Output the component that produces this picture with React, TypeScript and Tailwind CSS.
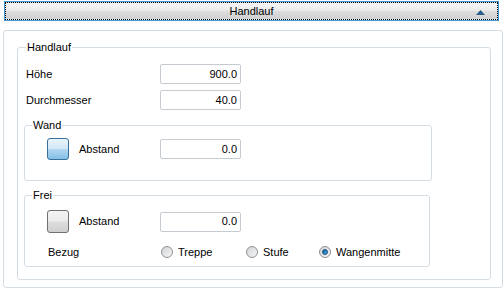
import React from 'react';

const font = { fontFamily: '"Liberation Sans", Arial, sans-serif' };

function NumField({ value }: { value: string }) {
  return (
    <div className="w-[81px] h-[20px] border border-[#c5cbd1] rounded-[2px] bg-white flex items-center justify-end pr-[3px] text-[11px] text-black">
      {value}
    </div>
  );
}

function Radio({ label, checked }: { label: string; checked?: boolean }) {
  return (
    <div className="flex items-center gap-[5px]">
      <div className="w-[12px] h-[12px] rounded-full border border-[#8f9193] bg-gradient-to-br from-[#d2d4d6] to-[#f6f6f6] flex items-center justify-center">
        {checked && (
          <div className="w-[6px] h-[6px] rounded-full bg-gradient-to-br from-[#0d5b9c] to-[#4cb3ee] border border-[#1b4f7c]" />
        )}
      </div>
      <span>{label}</span>
    </div>
  );
}

export default function App() {
  return (
    <div className="w-[504px] h-[292px] bg-white text-[11px] text-black overflow-hidden" style={font}>
      {/* Section header */}
      <div className="ml-[4px] mt-[1px] w-[495px] h-[20px] border border-[#3c98d8] p-0">
        <div className="h-full border border-dotted border-black bg-[linear-gradient(to_bottom,#f6f6f6_0%,#ececec_45%,#dedede_50%,#d0d0d0_100%)] relative flex items-center justify-center">
          <span className="leading-[13px]">Handlauf</span>
          <svg className="absolute right-[12px] top-[7px]" width="9" height="5" viewBox="0 0 9 5">
            <polygon points="0,5 4.5,0 9,5" fill="#2c5d8a" />
          </svg>
        </div>
      </div>

      {/* Outer panel */}
      <div className="ml-[3px] mt-[9px] w-[500px] h-[258px] border border-[#d5dde4] rounded-[3px] bg-white">
        <fieldset className="ml-[13px] mt-[10px] w-[474px] h-[239px] border border-[#d5dde4] rounded-[3px] p-0 m-0">
          <legend className="ml-[8px] px-[1px] leading-[13px]">Handlauf</legend>

          <div className="flex flex-col">
            <div className="flex items-center mt-[10px]">
              <span className="ml-[8px] w-[134px]">Höhe</span>
              <NumField value="900.0" />
            </div>
            <div className="flex items-center mt-[6px]">
              <span className="ml-[8px] w-[134px]">Durchmesser</span>
              <NumField value="40.0" />
            </div>

            {/* Wand */}
            <fieldset className="ml-[6px] mt-[9px] w-[408px] h-[62px] border border-[#d5dde4] rounded-[3px] p-0">
              <legend className="ml-[7px] px-[1px] leading-[13px]">Wand</legend>
              <div className="flex items-center mt-[6px]">
                <div className="ml-[22px] w-[22px] h-[22px] rounded-[3px] border border-[#3a6f9c] bg-[linear-gradient(to_bottom,#eaf4fb_0%,#d4e8f7_48%,#b2d6f0_52%,#84bfe8_100%)]" />
                <span className="ml-[10px] w-[81px]">Abstand</span>
                <NumField value="0.0" />
              </div>
            </fieldset>

            {/* Frei */}
            <fieldset className="ml-[6px] mt-[8px] w-[406px] h-[78px] border border-[#d5dde4] rounded-[3px] p-0">
              <legend className="ml-[7px] px-[1px] leading-[13px]">Frei</legend>
              <div className="flex items-center mt-[8px]">
                <div className="ml-[22px] w-[22px] h-[23px] rounded-[3px] border border-[#707070] bg-[linear-gradient(to_bottom,#f3f3f3_0%,#ebebeb_48%,#dddddd_52%,#cfcfcf_100%)]" />
                <span className="ml-[10px] w-[81px]">Abstand</span>
                <NumField value="0.0" />
              </div>
              <div className="flex items-center mt-[11px] h-[16px]">
                <span className="ml-[23px] w-[113px]">Bezug</span>
                <div className="w-[85px]">
                  <Radio label="Treppe" />
                </div>
                <div className="w-[73px]">
                  <Radio label="Stufe" />
                </div>
                <Radio label="Wangenmitte" checked />
              </div>
            </fieldset>
          </div>
        </fieldset>
      </div>
    </div>
  );
}
